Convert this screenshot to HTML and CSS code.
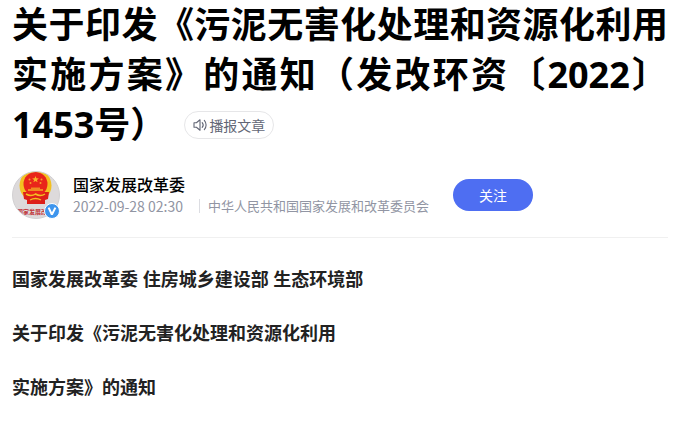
FILE: index.html
```html
<!DOCTYPE html>
<html lang="zh-CN">
<head>
	<meta charset="utf-8">
	<title>关于印发《污泥无害化处理和资源化利用实施方案》的通知</title>
	<link rel="stylesheet" href="styles.css">
</head>
<body>

<header>
	<div class="headline">
		<h1>关于印发《污泥无害化处理和资源化利用实施方案》的通知（发改环资〔2022〕1453号）</h1><button type="button" class="listen">
		<svg width="14" height="14" viewBox="0 0 14 14" fill="none" stroke="currentColor" stroke-width="1.1" stroke-linejoin="round" stroke-linecap="round" aria-hidden="true">
			<path d="M1 4.7h2.4L7 1.8v10.4L3.4 9.3H1z"/>
			<path d="M9.2 4.6c1.2 1.4 1.2 3.4 0 4.8M11.3 2.4c2.4 2.6 2.4 6.6 0 9.2"/>
		</svg>播报文章</button>
	</div>

	<div class="author">
		<a href="#" class="avatar" aria-label="国家发展改革委">
			<svg class="face" viewBox="0 0 48 48" aria-hidden="true">
				<clipPath id="round"><circle cx="24" cy="24" r="23.5"/></clipPath>
				<g clip-path="url(#round)">
					<rect width="48" height="48" fill="#dddadb"/>
					<circle cx="23.5" cy="14.5" r="16" fill="#f3c021"/>
					<path d="M11 21h26l-1 7-3 1v4H15v-4l-3-1z" fill="#dd1f19"/>
					<circle cx="23.5" cy="13" r="12" fill="#e9251a"/>
					<path d="M23.5 5l.9 2.3 2.5.1-2 1.5.7 2.4-2.1-1.4-2.1 1.4.7-2.4-2-1.5 2.5-.1z" fill="#f8b52a"/>
					<g fill="#f4a02a">
						<circle cx="17.5" cy="8.5" r="1"/>
						<circle cx="29.5" cy="8.5" r="1"/>
						<circle cx="18.5" cy="12" r="1"/>
						<circle cx="28.5" cy="12" r="1"/>
					</g>
					<path d="M19 16.5h9v1.5h3v2H16v-2h3z" fill="#f08a22"/>
					<path d="M14 23q5 3 9.5 0 5 3 9.5 0" fill="none" stroke="#f3c021" stroke-width="1.5"/>
					<path d="M18 29q5.5-3 11 0" fill="none" stroke="#f3c021" stroke-width="1.3"/>
					<text x="23" y="42.5" text-anchor="middle" class="face-text">国家发展改革</text>
				</g>
				<circle cx="24" cy="24" r="23.5" fill="none" stroke="#d2d0d2"/>
			</svg>
			<svg class="badge" viewBox="0 0 16 16" aria-hidden="true">
				<circle cx="8" cy="8" r="7.5" fill="#3e95ed" stroke="#fff"/>
				<path d="M4.6 4.6l3 6.4h.6l3.2-6.4" fill="none" stroke="#fff" stroke-width="2"/>
			</svg>
		</a>
		<div class="info">
			<a href="#" class="name">国家发展改革委</a>
			<div class="meta">
				<time datetime="2022-09-28T02:30">2022-09-28 02:30</time>
				<span class="source">中华人民共和国国家发展和改革委员会</span>
			</div>
		</div>
		<button type="button" class="follow">关注</button>
	</div>
</header>

<article>
	<p>国家发展改革委 住房城乡建设部 生态环境部</p>
	<p>关于印发《污泥无害化处理和资源化利用</p>
	<p>实施方案》的通知</p>
</article>

</body>
</html>
```

FILE: styles.css
```css
body {
	margin: 0;
	padding: 0 8px 0 12px;
	background: #fff;
	font-family: "Noto Sans", "Noto Sans CJK SC", sans-serif;
}

a {
	color: inherit;
	text-decoration: none;
}

button {
	font-family: inherit;
	cursor: pointer;
}

.headline {
	font-size: 36px;
	line-height: 50px;
	text-align: justify;
}

h1 {
	display: inline;
	margin: 0;
	font-size: inherit;
	color: #000;
}

.listen {
	display: inline-flex;
	align-items: center;
	gap: 2px;
	height: 28px;
	margin-left: 18px;
	padding: 0 8px;
	border: 1px solid #e6e6e8;
	border-radius: 14px;
	background: #fff;
	color: #626675;
	font-size: 14px;
	vertical-align: 6px;
}

.author {
	display: flex;
	align-items: center;
	padding: 21px 0 18px;
	border-bottom: 1px solid #f0f0f0;
}

.avatar {
	position: relative;
	width: 48px;
	height: 48px;
	margin-right: 13px;
}

.face {
	display: block;
	width: 48px;
	height: 48px;
}

.face-text {
	fill: #c2373c;
	font-size: 6px;
	font-weight: bold;
}

.badge {
	position: absolute;
	right: 0;
	bottom: 0;
	width: 16px;
	height: 16px;
}

.name {
	display: block;
	font-size: 16px;
	line-height: 22px;
	font-weight: 500;
	color: #000;
}

.meta {
	display: flex;
	align-items: center;
	font-size: 13px;
	line-height: 20px;
	color: #9195a3;
}

.meta time {
	font-family: "Noto Sans CJK SC", sans-serif;
	font-size: 14px;
}

.source {
	margin-left: 16px;
	padding-left: 8px;
	border-left: 1px solid #dcdde2;
	line-height: 14px;
}

.follow {
	width: 80px;
	height: 32px;
	margin-left: 24px;
	padding: 0;
	border: 0;
	border-radius: 16px;
	background: #4e6ef2;
	color: #fff;
	font-size: 14px;
}

article {
	padding-top: 27px;
	color: #222;
}

article p {
	margin: 0 0 26px;
	font-size: 18px;
	line-height: 28px;
	font-weight: bold;
}
```
